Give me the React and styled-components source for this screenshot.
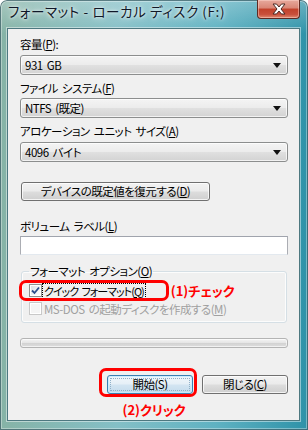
import React from "react";
import styled, { createGlobalStyle } from "styled-components";

const GlobalStyle = createGlobalStyle`
  html, body { margin: 0; padding: 0; background: #fff; overflow: hidden; }
  * { box-sizing: border-box; }
`;

const UI_FONT = `"Noto Sans CJK JP", "Liberation Sans", sans-serif`;

const Window = styled.div`
  width: 308px;
  height: 430px;
  display: flex;
  flex-direction: column;
  padding: 0 8px 9px 7px;
  border-radius: 7px 7px 0 0;
  background:
    linear-gradient(to bottom, rgba(255, 255, 255, 0.28), rgba(255, 255, 255, 0) 34px),
    linear-gradient(to right, #86b3a6 0%, #84bfc6 38%, #5fb2c2 70%, #2e92a8 100%);
  box-shadow: inset 0 0 0 1px rgba(20, 60, 70, 0.6), inset 0 0 0 2px rgba(255, 255, 255, 0.35);
  font-family: ${UI_FONT};
  font-feature-settings: "palt";
`;

const TitleBar = styled.div`
  height: 28px;
  display: flex;
  justify-content: space-between;
  align-items: flex-start;
`;

const Title = styled.div`
  padding: 3px 0 0 1px;
  font-size: 13.5px;
  letter-spacing: 0.6px;
  line-height: 17px;
  color: #101828;
  text-shadow: 0 0 6px rgba(255, 255, 255, 0.95), 0 0 3px rgba(255, 255, 255, 0.9);
  white-space: nowrap;
`;

const CloseButton = styled.div`
  width: 43px;
  height: 19px;
  display: flex;
  align-items: center;
  justify-content: center;
  border: 1px solid #5e2a22;
  border-top: none;
  border-radius: 0 0 4px 4px;
  background: linear-gradient(#e7a99c 0%, #d98575 45%, #c2412a 50%, #c9503b 80%, #e08a70 100%);
  box-shadow: inset 0 0 0 1px rgba(255, 220, 210, 0.45);
`;

const Body = styled.div`
  flex: 1;
  display: flex;
  flex-direction: column;
  padding: 0 11px 0 12px;
  background: #f0f0f0;
  border: 1px solid #4d7880;
  box-shadow: 0 0 0 1px rgba(255, 255, 255, 0.45);
  font-size: 11.5px;
  letter-spacing: -0.5px;
  word-spacing: 2px;
  color: #000;
`;

const Label = styled.div`
  margin-top: ${(p) => p.$top}px;
  line-height: 15px;
  height: 15px;
  white-space: nowrap;
`;

const Key = styled.span`
  text-decoration: underline;
`;

const Combo = styled.div`
  margin-top: ${(p) => p.$top}px;
  height: 20px;
  display: flex;
  align-items: center;
  justify-content: space-between;
  padding: 0 6px 0 4px;
  border: 1px solid #8c8e8e;
  border-radius: 3px;
  background: linear-gradient(#f4f4f4 0%, #ececec 48%, #e0e0e0 52%, #d3d3d3 100%);
  box-shadow: inset 0 0 0 1px rgba(255, 255, 255, 0.7);
  line-height: 15px;
  white-space: nowrap;
`;

const PushButton = styled.div`
  width: ${(p) => p.$width}px;
  height: 19px;
  margin-top: ${(p) => p.$top || 0}px;
  margin-left: ${(p) => p.$left || 0}px;
  display: flex;
  align-items: center;
  justify-content: center;
  border: 1px solid ${(p) => (p.$default ? "#3c7fb1" : "#707070")};
  border-radius: 3px;
  background: ${(p) =>
    p.$default
      ? "linear-gradient(#f1f7fb 0%, #e5eff7 48%, #d3e5f2 52%, #c4dbec 100%)"
      : "linear-gradient(#f2f2f2 0%, #ebebeb 48%, #dddddd 52%, #cfcfcf 100%)"};
  box-shadow: inset 0 0 0 1px ${(p) => (p.$default ? "rgba(200, 235, 255, 0.9)" : "rgba(255, 255, 255, 0.75)")};
  outline: ${(p) => (p.$default ? "1px dotted #8fb0c8" : "none")};
  outline-offset: -4px;
  line-height: 15px;
  white-space: nowrap;
`;

const TextBox = styled.div`
  margin-top: 2px;
  height: 19px;
  border: 1px solid #abadb3;
  border-top-color: #a0a4ad;
  border-bottom-color: #e3e9ef;
  background: #fff;
`;

const GroupBox = styled.fieldset`
  margin: 9px 1px 0 1px;
  padding: 0 0 5px 7px;
  min-width: 0;
  border: 1px solid #d5dfe5;
  border-radius: 3px;
  box-shadow: inset 0 0 0 1px rgba(255, 255, 255, 0.8);
`;

const Legend = styled.legend`
  padding: 0 1px;
  line-height: 15px;
`;

const OptionRow = styled.div`
  margin-top: ${(p) => p.$top || 0}px;
  height: 17px;
  display: flex;
  align-items: center;
  color: ${(p) => (p.$disabled ? "#a0a0a0" : "#000")};
  white-space: nowrap;
`;

const Marked = styled.div`
  position: relative;
  display: flex;
  align-items: center;
`;

const RedFrame = styled.div`
  position: absolute;
  top: ${(p) => p.$t}px;
  left: ${(p) => p.$l}px;
  width: ${(p) => p.$w}px;
  height: ${(p) => p.$h}px;
  border: 3px solid #ff0000;
  border-radius: 7px;
  pointer-events: none;
`;

const CheckBox = styled.div`
  width: 13px;
  height: 13px;
  flex: none;
  display: flex;
  align-items: center;
  justify-content: center;
  border: 1px solid ${(p) => (p.$disabled ? "#c8c8c8" : "#8e8f8f")};
  background: ${(p) =>
    p.$disabled ? "#f4f4f4" : "linear-gradient(135deg, #d8dde2 0%, #f2f4f6 60%, #ffffff 100%)"};
  box-shadow: inset 0 0 0 1px #fff;
`;

const OptionText = styled.span`
  margin-left: 1px;
  padding: 0 1px;
  line-height: 14px;
  font-size: ${(p) => (p.$focus ? "11px" : "11.5px")};
  letter-spacing: ${(p) => (p.$focus ? "-1px" : "-0.5px")};
  outline: ${(p) => (p.$focus ? "1px dotted #000" : "none")};
`;

const Note = styled.span`
  margin-left: ${(p) => p.$left || 0}px;
  margin-top: ${(p) => p.$top || 0}px;
  color: #ff0000;
  font-weight: 700;
  font-size: 13px;
  letter-spacing: 0;
  line-height: 15px;
  white-space: nowrap;
`;

const Progress = styled.div`
  margin-top: 15px;
  height: 10px;
  border: 1px solid #b4b4b4;
  border-radius: 3px;
  background: linear-gradient(#f4f4f4 0%, #e6e6e6 45%, #d3d3d3 55%, #dedede 100%);
  box-shadow: inset 0 0 0 1px rgba(255, 255, 255, 0.6);
`;

const ButtonRow = styled.div`
  margin-top: 27px;
  display: flex;
  justify-content: flex-end;
  align-items: flex-start;
  gap: 9px;
`;

const StartColumn = styled.div`
  display: flex;
  flex-direction: column;
  align-items: center;
`;

function Arrow() {
  return (
    <svg width="8" height="5" viewBox="0 0 8 5">
      <polygon points="0,0 8,0 4,5" fill="#111" />
    </svg>
  );
}

function CloseIcon() {
  return (
    <svg width="14" height="12" viewBox="0 0 14 12">
      <path
        d="M1 1 H4.5 L7 4 L9.5 1 H13 L9 6 L13 11 H9.5 L7 8 L4.5 11 H1 L5 6 Z"
        fill="#fff"
        stroke="#4a2a24"
        strokeWidth="1"
        strokeLinejoin="round"
      />
    </svg>
  );
}

function CheckMark() {
  return (
    <svg width="9" height="9" viewBox="0 0 9 9">
      <path d="M1 4.5 L3.5 7 L8 1.5" fill="none" stroke="#2b4c8c" strokeWidth="1.8" />
    </svg>
  );
}

export default function App() {
  return (
    <>
      <GlobalStyle />
      <Window>
        <TitleBar>
          <Title>フォーマット - ローカル ディスク (F:)</Title>
          <CloseButton>
            <CloseIcon />
          </CloseButton>
        </TitleBar>

        <Body>
          <Label $top={8}>
            容量(<Key>P</Key>):
          </Label>
          <Combo $top={3}>
            <span>931 GB</span>
            <Arrow />
          </Combo>

          <Label $top={6}>
            ファイル システム(<Key>F</Key>)
          </Label>
          <Combo $top={2}>
            <span>NTFS (既定)</span>
            <Arrow />
          </Combo>

          <Label $top={6}>
            アロケーション ユニット サイズ(<Key>A</Key>)
          </Label>
          <Combo $top={3}>
            <span>4096 バイト</span>
            <Arrow />
          </Combo>

          <PushButton $width={189} $top={20} $left={1}>
            デバイスの既定値を復元する(<Key>D</Key>)
          </PushButton>

          <Label $top={18}>
            ボリューム ラベル(<Key>L</Key>)
          </Label>
          <TextBox />

          <GroupBox>
            <Legend>
              フォーマット オプション(<Key>O</Key>)
            </Legend>
            <OptionRow $top={3}>
              <Marked>
                <RedFrame $t={-4} $l={-10} $w={150} $h={21} />
                <CheckBox>
                  <CheckMark />
                </CheckBox>
                <OptionText $focus>
                  クイック フォーマット(<Key>Q</Key>)
                </OptionText>
              </Marked>
              <Note $left={26}>(1)チェック</Note>
            </OptionRow>
            <OptionRow $disabled $top={1}>
              <CheckBox $disabled />
              <OptionText>
                MS-DOS の起動ディスクを作成する(<Key>M</Key>)
              </OptionText>
            </OptionRow>
          </GroupBox>

          <Progress />

          <ButtonRow>
            <StartColumn>
              <Marked>
                <RedFrame $t={-7} $l={-8} $w={98} $h={29} />
                <PushButton $width={86} $default>
                  開始(S)
                </PushButton>
              </Marked>
              <Note $top={8} $left={8}>
                (2)クリック
              </Note>
            </StartColumn>
            <PushButton $width={86}>
              閉じる(<Key>C</Key>)
            </PushButton>
          </ButtonRow>
        </Body>
      </Window>
    </>
  );
}
